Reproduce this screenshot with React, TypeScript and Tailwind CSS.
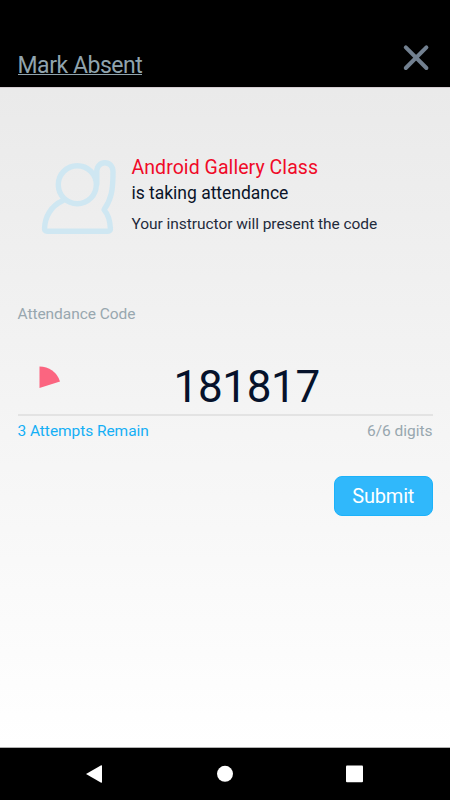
function RaisedHand() {
  return (
    <svg className="mt-[14px] h-[80px] w-[80px] shrink-0" viewBox="40 157 80 80" fill="none" stroke="#cfe7f2" strokeWidth="5.4" strokeLinejoin="round" strokeLinecap="round">
      <circle cx="77.3" cy="184.7" r="19" />
      <path d="M62.5 200.8C51 206 44.8 217 44.6 228.5Q44.5 231.3 47 231.3H108Q110.5 231.3 110.4 228.5C110 220.5 108.3 214.5 104 209.8C111.4 199 113.1 190 113 171.5C113 166.3 109.3 162.7 104.9 162.7C100.5 162.7 96.8 166.3 96.8 171.3V184" />
    </svg>
  );
}

export default function App() {
  return (
    <div className="flex h-[800px] w-[450px] flex-col overflow-hidden bg-black font-['Roboto',sans-serif] whitespace-nowrap">
      <header className="flex h-[87px] shrink-0 items-start justify-between pr-[20px] pl-[17.5px]">
        <a className="mt-[50px] h-[25px] border-b border-[#90a4ae] text-[23px] leading-[31px] tracking-[-0.47px] text-[#90a4ae]">Mark Absent</a>
        <svg className="mt-[44px] h-[28px] w-[28px]" viewBox="0 0 28 28" stroke="#728090" strokeWidth="4" strokeLinecap="round">
          <path d="M3.8 3.3 24.4 24M24.4 3.3 3.8 24" />
        </svg>
      </header>

      <main className="flex h-[661px] shrink-0 flex-col border-t border-b border-t-[#d5cdd2] border-b-[#b0b0b0] bg-linear-to-b from-[#eaeaea] to-white pr-[17.5px] pl-[17.5px]">
        <section className="flex pt-[55px] pl-[22.5px]">
          <RaisedHand />
          <div className="ml-[11.5px] pt-[12px]">
            <h1 className="text-[19.5px] leading-[26px] tracking-[0.06px] text-[#f00a28]">Android Gallery Class</h1>
            <p className="text-[17.5px] leading-[24px] tracking-[-0.02px] text-[#0a1428]">is taking attendance</p>
            <p className="mt-[7px] text-[15.5px] leading-[24px] tracking-[-0.05px] text-[#1f2b3c]">Your instructor will present the code</p>
          </div>
        </section>

        <section className="mt-[67px]">
          <div className="text-[15.5px] leading-[20px] tracking-[-0.06px] text-[#98a7af]">Attendance Code</div>
          <div className="flex h-[92px] border-b-2 border-[#e3e3e3]">
            <svg className="mt-[42px] ml-[21.5px] h-[23px] w-[23px]" viewBox="0 0 23 23">
              <path d="M.5 .4A21.5 21.5 0 0 1 21 15.5L.5 22Z" fill="#fb6580" />
            </svg>
            <div className="mt-[37px] ml-[111.5px] text-[44px] leading-[52px] tracking-[-0.35px] text-[#06122b]">181817</div>
          </div>
          <div className="flex justify-between pt-[5px] text-[15.5px] leading-[20px]">
            <span className="tracking-[-0.06px] text-[#14aff5]">3 Attempts Remain</span>
            <span className="tracking-[-0.03px] text-[#98a7af]">6/6 digits</span>
          </div>
          <button className="mt-[35px] ml-auto flex h-[39.5px] w-[98.5px] items-center justify-center rounded-[8px] border border-[#1cb2fa] bg-[#30b8fb] pt-px text-[20px] leading-[24px] tracking-[-0.2px] text-white">Submit</button>
        </section>
      </main>

      <nav className="flex h-[52px] shrink-0 items-center bg-black">
        <svg className="h-[52px] w-[450px]" viewBox="0 0 450 52" fill="#fff">
          <path d="M86 26 101.2 17.2Q102 17 102 18V34Q102 35 101.2 34.8Z" />
          <circle cx="225" cy="25.8" r="8" />
          <rect x="346" y="17.4" width="17" height="16.8" rx="1" />
        </svg>
      </nav>
    </div>
  );
}
